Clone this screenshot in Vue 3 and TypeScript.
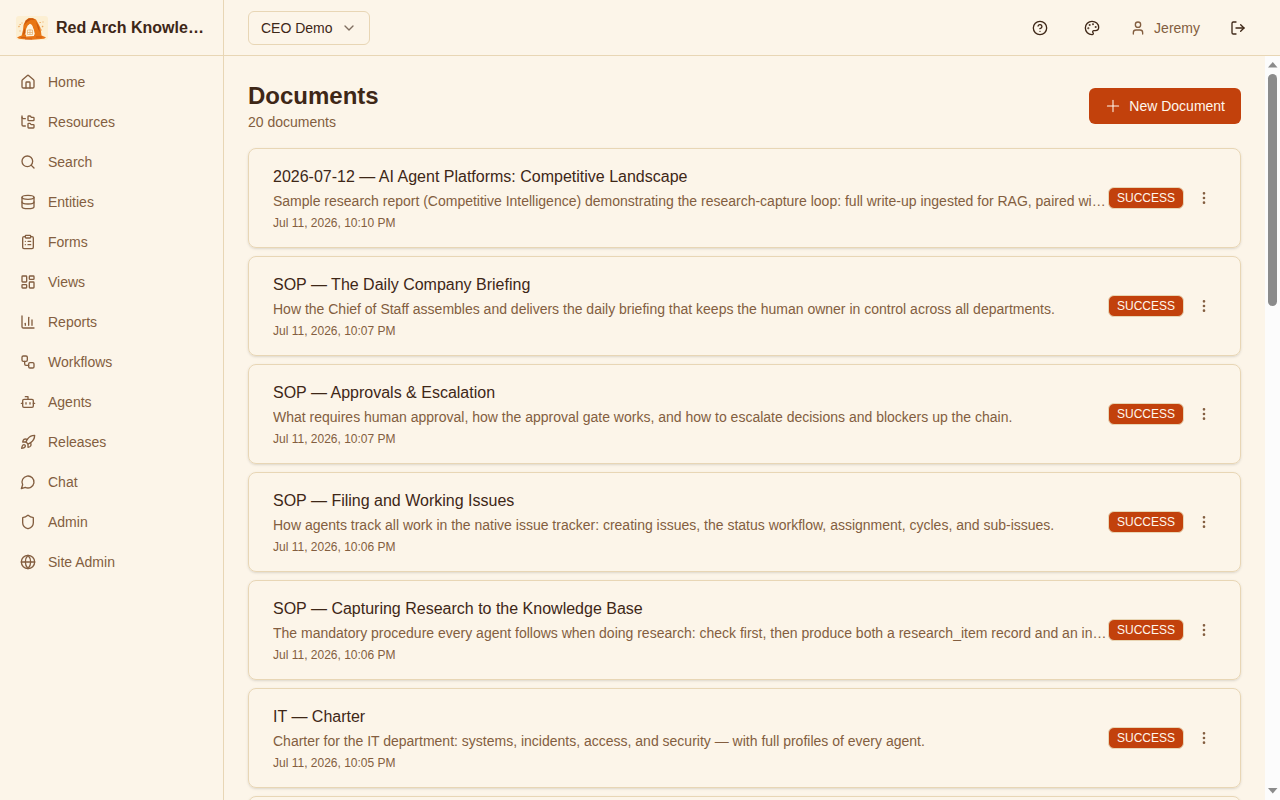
<script setup lang="ts">
interface NavItem { label: string; icon: string }
interface Doc { title: string; description: string; date: string }

const nav: NavItem[] = [
  { label: 'Home', icon: '<path d="M15 21v-8a1 1 0 0 0-1-1h-4a1 1 0 0 0-1 1v8"/><path d="M3 10a2 2 0 0 1 .709-1.528l7-5.999a2 2 0 0 1 2.582 0l7 5.999A2 2 0 0 1 21 10v9a2 2 0 0 1-2 2H5a2 2 0 0 1-2-2z"/>' },
  { label: 'Resources', icon: '<path d="M20 10a1 1 0 0 0 1-1V6a1 1 0 0 0-1-1h-2.5a1 1 0 0 1-.8-.4l-.9-1.2A1 1 0 0 0 15 3h-2a1 1 0 0 0-1 1v5a1 1 0 0 0 1 1Z"/><path d="M20 21a1 1 0 0 0 1-1v-3a1 1 0 0 0-1-1h-2.9a1 1 0 0 1-.88-.55l-.42-.85a1 1 0 0 0-.92-.6H13a1 1 0 0 0-1 1v5a1 1 0 0 0 1 1Z"/><path d="M3 5a2 2 0 0 0 2 2h3"/><path d="M3 3v13a2 2 0 0 0 2 2h3"/>' },
  { label: 'Search', icon: '<path d="m21 21-4.34-4.34"/><circle cx="11" cy="11" r="8"/>' },
  { label: 'Entities', icon: '<ellipse cx="12" cy="5" rx="9" ry="3"/><path d="M3 5v14a9 3 0 0 0 18 0V5"/><path d="M3 12a9 3 0 0 0 18 0"/>' },
  { label: 'Forms', icon: '<rect width="8" height="4" x="8" y="2" rx="1"/><path d="M16 4h2a2 2 0 0 1 2 2v14a2 2 0 0 1-2 2H6a2 2 0 0 1-2-2V6a2 2 0 0 1 2-2h2"/><path d="M12 11h4"/><path d="M12 16h4"/><path d="M8 11h.01"/><path d="M8 16h.01"/>' },
  { label: 'Views', icon: '<rect width="7" height="9" x="3" y="3" rx="1"/><rect width="7" height="5" x="14" y="3" rx="1"/><rect width="7" height="9" x="14" y="12" rx="1"/><rect width="7" height="5" x="3" y="16" rx="1"/>' },
  { label: 'Reports', icon: '<path d="M3 3v16a2 2 0 0 0 2 2h16"/><path d="M18 17V9"/><path d="M13 17V5"/><path d="M8 17v-3"/>' },
  { label: 'Workflows', icon: '<rect width="8" height="8" x="3" y="3" rx="2"/><path d="M7 11v4a2 2 0 0 0 2 2h4"/><rect width="8" height="8" x="13" y="13" rx="2"/>' },
  { label: 'Agents', icon: '<path d="M12 8V4H8"/><rect width="16" height="12" x="4" y="8" rx="2"/><path d="M2 14h2"/><path d="M20 14h2"/><path d="M15 13v2"/><path d="M9 13v2"/>' },
  { label: 'Releases', icon: '<path d="M4.5 16.5c-1.5 1.26-2 5-2 5s3.74-.5 5-2c.71-.84.7-2.13-.09-2.91a2.18 2.18 0 0 0-2.91-.09z"/><path d="m12 15-3-3a22 22 0 0 1 2-3.95A12.88 12.88 0 0 1 22 2c0 2.72-.78 7.5-6 11a22.35 22.35 0 0 1-4 2z"/><path d="M9 12H4s.55-3.03 2-4c1.62-1.08 5 0 5 0"/><path d="M12 15v5s3.03-.55 4-2c1.08-1.62 0-5 0-5"/>' },
  { label: 'Chat', icon: '<path d="M7.9 20A9 9 0 1 0 4 16.1L2 22Z"/>' },
  { label: 'Admin', icon: '<path d="M20 13c0 5-3.5 7.5-7.66 8.95a1 1 0 0 1-.67-.01C7.5 20.5 4 18 4 13V6a1 1 0 0 1 1-1c2 0 4.5-1.2 6.24-2.72a1.17 1.17 0 0 1 1.52 0C14.51 3.81 17 5 19 5a1 1 0 0 1 1 1z"/>' },
  { label: 'Site Admin', icon: '<circle cx="12" cy="12" r="10"/><path d="M12 2a14.5 14.5 0 0 0 0 20 14.5 14.5 0 0 0 0-20"/><path d="M2 12h20"/>' },
]

const docs: Doc[] = [
  { title: '2026-07-12 — AI Agent Platforms: Competitive Landscape', description: 'Sample research report (Competitive Intelligence) demonstrating the research-capture loop: full write-up ingested for RAG, paired with a research_item record.', date: 'Jul 11, 2026, 10:10 PM' },
  { title: 'SOP — The Daily Company Briefing', description: 'How the Chief of Staff assembles and delivers the daily briefing that keeps the human owner in control across all departments.', date: 'Jul 11, 2026, 10:07 PM' },
  { title: 'SOP — Approvals & Escalation', description: 'What requires human approval, how the approval gate works, and how to escalate decisions and blockers up the chain.', date: 'Jul 11, 2026, 10:07 PM' },
  { title: 'SOP — Filing and Working Issues', description: 'How agents track all work in the native issue tracker: creating issues, the status workflow, assignment, cycles, and sub-issues.', date: 'Jul 11, 2026, 10:06 PM' },
  { title: 'SOP — Capturing Research to the Knowledge Base', description: 'The mandatory procedure every agent follows when doing research: check first, then produce both a research_item record and an ingested document.', date: 'Jul 11, 2026, 10:06 PM' },
  { title: 'IT — Charter', description: 'Charter for the IT department: systems, incidents, access, and security — with full profiles of every agent.', date: 'Jul 11, 2026, 10:05 PM' },
  { title: 'Finance — Charter', description: 'Charter for the Finance department.', date: 'Jul 11, 2026, 10:05 PM' },
]
</script>

<template>
  <div class="app">
    <aside class="sidebar">
      <div class="brand">
        <svg class="logo" viewBox="0 0 32 24">
          <rect width="32" height="24" rx="3" fill="#fcefd3" />
          <path d="M1 21.500l3-1.500 3-.5 3-1h12l3 .7 3 1.300 2 1-2 1.300-6 .5-6 .5-8-.6-5-.5z" fill="#e87516" />
          <path d="M5.500 20L7 14l.5-5L9.500 4.500l3-2.300 4-.2 3.500 1.500L22.500 8l2 4 1 7.500-6 1-1.500-6-1.500-4-2.500-2.200-2.500 1.700-1.500 3-.5 4-1 4z" fill="#e87613" />
          <path d="M8 9l2-4.500 3-2.200 4 .2 2.500 1.500-4.500-.3-3.500 2zM20 5.500l2.500 4.500 1.500 6-2-3zM7.500 15l1.500-3 .2 5-2 2z" fill="#c9580f" />
          <path d="M10 20.500l.5-6 1.500-5 2-1.700 2 1.200 1.500 4.500.6 6.500z" fill="#fff5e0" />
          <path d="M11.500 14h5v4.500h-5zM14 13v6M11 16.500h6" fill="none" stroke="#e9b67a" stroke-width=".8" />
          <path d="M3.500 8.500h1.300M5.500 7h1M2.500 11l1-1M23.500 6.500h1.300M26 11l1.200-1M25 14h1M26.500 6h1M3.500 15h1" stroke="#eba75d" stroke-width="1.200" />
          <path d="M5 21.500h5M20 21h6M9 23h7" stroke="#c9580f" stroke-width=".7" />
        </svg>
        <span class="brand-name">Red Arch Knowledge</span>
      </div>
      <nav class="nav">
        <a v-for="item in nav" :key="item.label" class="nav-item">
          <svg class="icon" viewBox="0 0 24 24" v-html="item.icon" />
          <span>{{ item.label }}</span>
        </a>
      </nav>
    </aside>

    <div class="content">
      <header class="topbar">
        <button class="workspace">
          <span>CEO Demo</span>
          <svg class="icon chevron" viewBox="0 0 24 24"><path d="m6 9 6 6 6-6" /></svg>
        </button>
        <div class="actions">
          <button class="icon-button">
            <svg class="icon" viewBox="0 0 24 24"><circle cx="12" cy="12" r="10" /><path d="M9.090 9a3 3 0 0 1 5.830 1c0 2-3 3-3 3" /><path d="M12 17h.01" /></svg>
          </button>
          <button class="icon-button palette">
            <svg class="icon" viewBox="0 0 24 24"><path d="M12 22a1 1 0 0 1 0-20 10 9 0 0 1 10 9 5 5 0 0 1-5 5h-2.250a1.750 1.750 0 0 0-1.400 2.800l.3.4a1.750 1.750 0 0 1-1.400 2.800z" /><circle cx="13.500" cy="6.500" r=".5" fill="currentColor" /><circle cx="17.500" cy="10.500" r=".5" fill="currentColor" /><circle cx="6.500" cy="12.500" r=".5" fill="currentColor" /><circle cx="8.500" cy="7.500" r=".5" fill="currentColor" /></svg>
          </button>
          <div class="user">
            <svg class="icon" viewBox="0 0 24 24"><path d="M19 21v-2a4 4 0 0 0-4-4H9a4 4 0 0 0-4 4v2" /><circle cx="12" cy="7" r="4" /></svg>
            <span>Jeremy</span>
          </div>
          <button class="icon-button">
            <svg class="icon" viewBox="0 0 24 24"><path d="m16 17 5-5-5-5" /><path d="M21 12H9" /><path d="M9 21H5a2 2 0 0 1-2-2V5a2 2 0 0 1 2-2h4" /></svg>
          </button>
        </div>
      </header>

      <div class="viewport">
        <main class="main">
          <div class="heading">
            <div>
              <h1>Documents</h1>
              <p>20 documents</p>
            </div>
            <button class="primary">
              <svg class="icon plus" viewBox="0 0 15 15"><path d="M2.250 7.500h10.500" /><path d="M7.500 2.250v10.500" /></svg>
              <span>New Document</span>
            </button>
          </div>
          <div class="list">
            <article v-for="doc in docs" :key="doc.title" class="card">
              <div class="card-text">
                <h2>{{ doc.title }}</h2>
                <p class="description">{{ doc.description }}</p>
                <p class="date">{{ doc.date }}</p>
              </div>
              <span class="badge">SUCCESS</span>
              <button class="more">
                <svg class="icon" viewBox="0 0 24 24"><circle cx="12" cy="12" r="1" /><circle cx="12" cy="5" r="1" /><circle cx="12" cy="19" r="1" /></svg>
              </button>
            </article>
          </div>
        </main>
        <div class="scrollbar">
          <svg class="arrow" viewBox="0 0 15 18"><path d="M3 11.500h9.500L7.750 6z" /></svg>
          <div class="thumb" />
          <div class="track" />
          <svg class="arrow" viewBox="0 0 15 18"><path d="M3 6h9.500L7.750 11.500z" /></svg>
        </div>
      </div>
    </div>
  </div>
</template>

<style>
body { margin: 0; overflow: hidden; }
</style>

<style scoped>
* { box-sizing: border-box; }
.app {
  --bg: #fcf5e9;
  --fg: #3e2717;
  --muted: #835e40;
  --border: #e8d6b5;
  --primary: #c2410c;
  display: flex;
  height: 100vh;
  background: var(--bg);
  color: var(--fg);
  font: 14px/20px "Liberation Sans", Arial, sans-serif;
}
h1, h2, p { margin: 0; }
button { border: 0; background: none; font: inherit; color: inherit; padding: 0; }
.icon {
  display: block;
  flex: none;
  width: 16px;
  height: 16px;
  fill: none;
  stroke: currentColor;
  stroke-width: 2;
  stroke-linecap: round;
  stroke-linejoin: round;
}
.sidebar { width: 224px; flex: none; border-right: 1px solid var(--border); }
.brand {
  display: flex;
  align-items: center;
  gap: 8px;
  height: 56px;
  padding: 0 16px;
  border-bottom: 1px solid var(--border);
}
.logo { width: 32px; height: 24px; flex: none; }
.brand-name {
  font-size: 16px;
  line-height: 24px;
  font-weight: 700;
  overflow: hidden;
  text-overflow: ellipsis;
  white-space: nowrap;
}
.nav { display: flex; flex-direction: column; gap: 4px; padding: 8px; }
.nav-item {
  display: flex;
  align-items: center;
  gap: 12px;
  height: 36px;
  padding: 0 12px;
  color: var(--muted);
}
.content { flex: 1; min-width: 0; display: flex; flex-direction: column; }
.topbar {
  display: flex;
  align-items: center;
  justify-content: space-between;
  height: 56px;
  flex: none;
  padding: 0 24px;
  border-bottom: 1px solid var(--border);
}
.workspace {
  display: flex;
  align-items: center;
  gap: 8px;
  height: 34px;
  padding: 0 12px;
  border: 1px solid var(--border);
  border-radius: 6px;
}
.chevron { opacity: .65; }
.actions { display: flex; align-items: center; }
.icon-button { display: grid; place-items: center; width: 36px; height: 36px; }
.palette { margin-left: 16px; }
.user { display: flex; align-items: center; gap: 8px; margin: 0 20px; color: var(--muted); }
.viewport { display: flex; flex: 1; min-height: 0; }
.main { flex: 1; min-width: 0; overflow: hidden; padding: 24px; }
.heading { display: flex; align-items: center; justify-content: space-between; margin-bottom: 16px; }
h1 { font-size: 24px; line-height: 32px; font-weight: 700; }
.heading p { color: var(--muted); }
.primary {
  display: flex;
  align-items: center;
  gap: 8px;
  height: 36px;
  padding: 0 16px;
  border-radius: 6px;
  background: var(--primary);
  color: #fff7ed;
}
.plus { stroke-width: 1; }
.list { display: flex; flex-direction: column; gap: 8px; }
.card {
  display: flex;
  align-items: center;
  height: 100px;
  padding: 16px 24px;
  border: 1px solid var(--border);
  border-radius: 8px;
  box-shadow: 0 1px 3px rgba(0, 0, 0, .1), 0 1px 2px -1px rgba(0, 0, 0, .1);
}
.card-text { flex: 1; min-width: 0; }
h2 { font-size: 16px; line-height: 24px; font-weight: 400; }
.description {
  margin-top: 2px;
  color: var(--muted);
  overflow: hidden;
  text-overflow: ellipsis;
  white-space: nowrap;
}
.date { margin-top: 4px; font-size: 12px; line-height: 16px; color: var(--muted); }
.badge {
  height: 22px;
  padding: 2px 8px;
  border: 1px solid var(--border);
  border-radius: 6px;
  background: var(--primary);
  color: #fff7ed;
  font-size: 12px;
  line-height: 16px;
}
.more { display: grid; place-items: center; width: 24px; height: 24px; margin-left: 8px; color: var(--muted); }
.scrollbar { display: flex; flex-direction: column; width: 15px; background: #fcfcfc; }
.arrow { display: block; width: 15px; height: 18px; fill: #8b8b8b; flex: none; }
.thumb { width: 9px; height: 232px; margin-left: 3px; border-radius: 5px; background: #8b8b8b; flex: none; }
.track { flex: 1; }
</style>
